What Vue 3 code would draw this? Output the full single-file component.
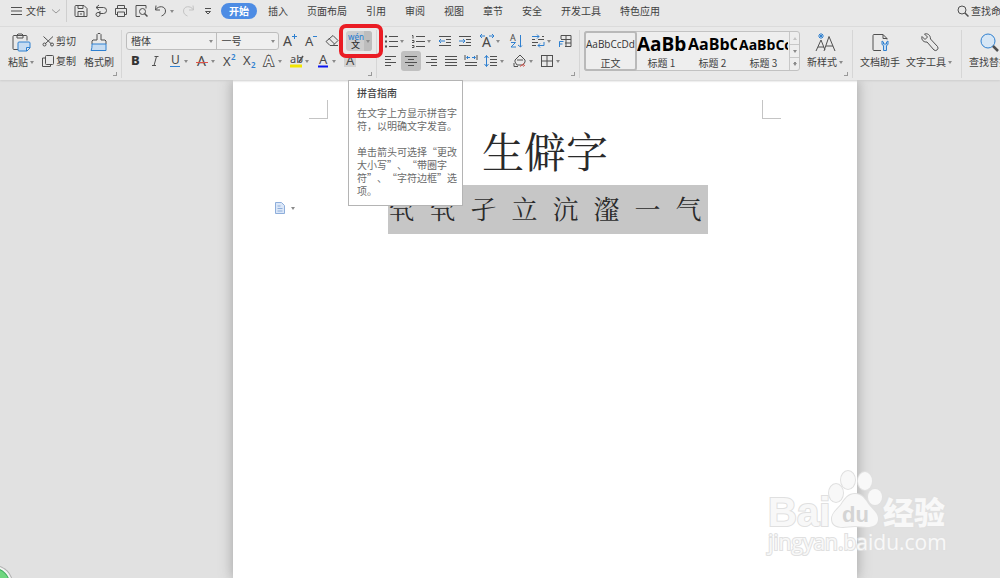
<template>
  <div class="app">
    <!-- 标题栏 -->
    <header class="menu-bar">
      <button class="file-btn">
        <svg class="icon-sm" viewBox="0 0 12 12" v-html="icons.menu"></svg>
        <span>文件</span>
        <svg class="icon-sm" viewBox="0 0 12 12" v-html="icons.chevron"></svg>
      </button>
      <div class="quick-bar">
        <button
          v-for="item in quickItems"
          :key="item.icon"
          class="tool"
          :class="{ drop: item.drop }"
          :aria-label="item.label"
        >
          <svg class="icon" viewBox="0 0 16 16" v-html="icons[item.icon]"></svg>
          <i v-if="item.drop" class="caret"></i>
        </button>
      </div>
      <nav class="tabs">
        <button
          v-for="tab in tabs"
          :key="tab"
          class="tab"
          :class="{ active: tab === activeTab }"
          @click="activeTab = tab"
        >{{ tab }}</button>
      </nav>
      <button class="search-btn">
        <svg class="icon-sm" viewBox="0 0 12 12" v-html="icons.search"></svg>
        <span>查找命令</span>
      </button>
    </header>

    <!-- 功能区 -->
    <section class="ribbon">
      <div class="group clipboard">
        <button class="big-btn">
          <svg class="icon-lg" viewBox="0 0 22 22" v-html="icons.paste"></svg>
          <span class="label">粘贴<i class="caret"></i></span>
        </button>
        <div class="rows">
          <button class="text-btn">
            <svg class="icon-sm" viewBox="0 0 12 12" v-html="icons.cut"></svg>
            <span>剪切</span>
          </button>
          <button class="text-btn">
            <svg class="icon-sm" viewBox="0 0 12 12" v-html="icons.copy"></svg>
            <span>复制</span>
          </button>
        </div>
        <button class="big-btn">
          <svg class="icon-lg" viewBox="0 0 22 22" v-html="icons.brush"></svg>
          <span class="label">格式刷</span>
        </button>
        <i class="corner"></i>
      </div>

      <div class="group font">
        <div class="row">
          <div class="combos">
            <label class="combo family">
              <select v-model="fontFamily" aria-label="字体">
                <option>楷体</option>
                <option>宋体</option>
                <option>黑体</option>
              </select>
              <i class="caret"></i>
            </label>
            <label class="combo size">
              <select v-model="fontSize" aria-label="字号">
                <option>一号</option>
                <option>二号</option>
                <option>三号</option>
              </select>
              <i class="caret"></i>
            </label>
          </div>
          <button
            v-for="item in sizeItems"
            :key="item.icon"
            class="tool spaced"
            :aria-label="item.label"
          >
            <svg class="icon" viewBox="0 0 16 16" v-html="icons[item.icon]"></svg>
          </button>
          <div class="pinyin">
            <button class="pinyin-btn" aria-label="拼音指南" aria-describedby="pinyin-tip">
              <svg class="icon" viewBox="0 0 16 16" v-html="icons.pinyin"></svg>
              <span class="pinyin-drop"><i class="caret"></i></span>
            </button>
            <div class="marker"></div>
            <div id="pinyin-tip" class="tooltip" role="tooltip">
              <strong>拼音指南</strong>
              <p>在文字上方显示拼音字<br />符，以明确文字发音。</p>
              <p>单击箭头可选择“更改<br />大小写”、“带圈字<br />符”、“字符边框”选<br />项。</p>
            </div>
          </div>
        </div>
        <div class="row">
          <button
            v-for="item in fontItems"
            :key="item.icon"
            class="tool"
            :class="{ drop: item.drop }"
            :aria-label="item.label"
          >
            <svg class="icon" viewBox="0 0 16 16" v-html="icons[item.icon]"></svg>
            <i v-if="item.drop" class="caret"></i>
          </button>
        </div>
        <i class="corner"></i>
      </div>

      <div class="group paragraph">
        <div v-for="(row, i) in paragraphRows" :key="i" class="row">
          <button
            v-for="item in row"
            :key="item.icon"
            class="tool"
            :class="{ drop: item.drop, on: item.on, gap: item.gap }"
            :aria-label="item.label"
          >
            <svg class="icon" viewBox="0 0 16 16" v-html="icons[item.icon]"></svg>
            <i v-if="item.drop" class="caret"></i>
          </button>
        </div>
        <i class="corner"></i>
      </div>

      <div class="group styles">
        <div class="gallery">
          <button
            v-for="s in styleItems"
            :key="s.name"
            class="style-item"
            :class="[s.kind, { selected: s.name === activeStyle }]"
            @click="activeStyle = s.name"
          >
            <span class="sample">{{ s.sample }}</span>
            <span class="style-name">{{ s.name }}</span>
          </button>
          <div class="scroller">
            <button aria-label="上一行"><i class="caret up"></i></button>
            <button aria-label="下一行"><i class="caret"></i></button>
            <button aria-label="更多样式"><i class="caret more"></i></button>
          </div>
        </div>
        <button class="big-btn">
          <svg class="icon-lg" viewBox="0 0 22 22" v-html="icons.newStyle"></svg>
          <span class="label">新样式<i class="caret"></i></span>
        </button>
        <i class="corner"></i>
      </div>

      <div class="group helpers">
        <button class="big-btn">
          <svg class="icon-lg" viewBox="0 0 22 22" v-html="icons.docHelper"></svg>
          <span class="label">文档助手</span>
        </button>
        <button class="big-btn">
          <svg class="icon-lg" viewBox="0 0 22 22" v-html="icons.wrench"></svg>
          <span class="label">文字工具<i class="caret"></i></span>
        </button>
      </div>

      <div class="group find">
        <button class="big-btn">
          <svg class="icon-lg" viewBox="0 0 22 22" v-html="icons.find"></svg>
          <span class="label">查找替换</span>
        </button>
      </div>
    </section>

    <!-- 文档区 -->
    <main class="canvas">
      <article class="page">
        <div class="margins">
          <i class="mark left"></i>
          <i class="mark right"></i>
        </div>
        <h1 class="title">生僻字</h1>
        <div class="line">
          <p class="selection">
            <span v-for="(ch, i) in phrase" :key="i">{{ ch }}</span>
          </p>
          <button class="paste-tag" aria-label="粘贴选项">
            <svg class="icon-sm" viewBox="0 0 12 12" v-html="icons.pasteTag"></svg>
            <i class="caret"></i>
          </button>
        </div>
      </article>
      <i class="ball"></i>
      <svg class="watermark" viewBox="0 0 186 90">
        <ellipse cx="72" cy="24" rx="7" ry="9" />
        <ellipse cx="84" cy="11" rx="7" ry="9" />
        <ellipse cx="101" cy="12" rx="7" ry="9" />
        <ellipse cx="111" cy="28" rx="7" ry="8" />
        <path d="M91 25c7 0 10 5 14 11c4 5 9 8 9 14c0 6-5 8-11 8c-4 0-7-1-12-1s-8 1-12 1c-6 0-11-2-11-8c0-6 5-9 9-14c4-6 7-11 14-11z" />
        <text class="wm-bai" x="4" y="57">Bai</text>
        <text class="wm-du" x="78" y="53">du</text>
        <text class="wm-exp" x="119" y="55">经验</text>
        <text class="wm-url" x="4" y="81">jingyan.baidu.com</text>
      </svg>
    </main>
  </div>
</template>

<script setup>
/**
 * 文字处理编辑器主界面：菜单栏、功能区、文档页面
 */
import { ref } from 'vue'

const activeTab = ref('开始')
const activeStyle = ref('正文')
const fontFamily = ref('楷体')
const fontSize = ref('一号')

const tabs = ['开始', '插入', '页面布局', '引用', '审阅', '视图', '章节', '安全', '开发工具', '特色应用']
const phrase = [...'茕茕孑立沆瀣一气']

const quickItems = [
  { icon: 'save', label: '保存' },
  { icon: 'export', label: '输出' },
  { icon: 'print', label: '打印' },
  { icon: 'preview', label: '打印预览' },
  { icon: 'undo', label: '撤销', drop: true },
  { icon: 'redo', label: '恢复' },
  { icon: 'more', label: '自定义快速访问' }
]

const sizeItems = [
  { icon: 'grow', label: '增大字号' },
  { icon: 'shrink', label: '减小字号' },
  { icon: 'eraser', label: '清除格式' }
]

const fontItems = [
  { icon: 'bold', label: '加粗' },
  { icon: 'italic', label: '倾斜' },
  { icon: 'underline', label: '下划线', drop: true },
  { icon: 'strike', label: '删除线', drop: true },
  { icon: 'sup', label: '上标' },
  { icon: 'sub', label: '下标' },
  { icon: 'effect', label: '文字效果', drop: true },
  { icon: 'highlight', label: '突出显示', drop: true },
  { icon: 'color', label: '字体颜色', drop: true },
  { icon: 'shade', label: '字符底纹' }
]

const paragraphRows = [
  [
    { icon: 'bullets', label: '项目符号', drop: true },
    { icon: 'numbers', label: '编号', drop: true },
    { icon: 'outdent', label: '减少缩进量' },
    { icon: 'indent', label: '增加缩进量' },
    { icon: 'scale', label: '中文版式', drop: true, gap: true },
    { icon: 'sort', label: '排序', gap: true },
    { icon: 'wrap', label: '显示编辑标记', drop: true, gap: true },
    { icon: 'tabStop', label: '制表位' }
  ],
  [
    { icon: 'left', label: '左对齐' },
    { icon: 'center', label: '居中对齐', on: true },
    { icon: 'right', label: '右对齐' },
    { icon: 'justify', label: '两端对齐' },
    { icon: 'distribute', label: '分散对齐' },
    { icon: 'spacing', label: '行距', drop: true },
    { icon: 'fill', label: '底纹颜色', drop: true, gap: true },
    { icon: 'border', label: '边框', drop: true }
  ]
]

const styleItems = [
  { name: '正文', sample: 'AaBbCcDd', kind: 'body' },
  { name: '标题 1', sample: 'AaBb', kind: 'h1' },
  { name: '标题 2', sample: 'AaBbC', kind: 'h2' },
  { name: '标题 3', sample: 'AaBbCc', kind: 'h3' }
]

// 图标：默认描边色由 svg 继承，蓝色为强调部分
const BLUE = '#2f80d0'
const B = `stroke="${BLUE}"`
const letter = (x, y, size, ch, fill = '#484848', weight = 400) =>
  `<text x="${x}" y="${y}" font-size="${size}" font-weight="${weight}" font-family="Noto Sans, Noto Sans CJK SC, sans-serif" fill="${fill}" stroke="none">${ch}</text>`

const icons = {
  menu: '<path d="M1 2.500h11M1 6h11M1 9.500h11"/>',
  chevron: '<path d="M2 4.500l4 3.500l4-3.500" stroke="#999"/>',
  search: '<circle cx="5" cy="5" r="4"/><path d="M8 8l3.500 3.500" stroke-width="1.500"/>',
  save: '<path d="M3 2.500h8l3 3v8h-11a1 1 0 0 1-1-1v-9a1 1 0 0 1 1-1z"/><path d="M5 2.500v3h5v-3M5 13.500v-5h6v5M7 11h2"/>',
  export: '<path d="M3 4.500h7.500a3 3 0 0 1 0 6h-4M6 2l-3 2.500l3 2.500M7 8v3.500a2 2 0 1 1-2-2h2"/>',
  print: '<path d="M4.500 5v-2.500h7v2.500M4.500 11.500h-2v-6h11v6h-2"/><path d="M4.500 9h7v4.500h-7z"/>',
  preview: '<path d="M7 13.500h-4v-11h10v3"/><circle cx="9.500" cy="8.500" r="3"/><path d="M11.500 10.500l3 3" stroke-width="1.500"/>',
  undo: '<path d="M3 2.500l-.5 4.500h4.500M2.500 7c3-5 10-4 10 1c0 3-2 4-4 5"/>',
  redo: '<path d="M13 2.500l.5 4.500h-4.500M13.500 7c-3-5-10-4-10 1c0 3 2 4 4 5" stroke="#c4c4c4"/>',
  more: '<path d="M5 5.500h6M5.500 8.500l2.500 2.500l2.500-2.500z"/>',
  paste: `<path d="M8 17.500h-4a1 1 0 0 1-1-1v-12a1 1 0 0 1 1-1h12a1 1 0 0 1 1 1v4M7 3v3h6v-3l-1-1h-4z"/><path d="M8 11a1 1 0 0 1 1-1h10a1 1 0 0 1 1 1v5l-3 3h-8a1 1 0 0 1-1-1zM20 15.500h-3.500v3.500" fill="#c6dcf2" ${B}/>`,
  cut: '<path d="M1.500 1.500l8 7.500M11 1.500l-8 7.500"/><circle cx="2.500" cy="9.500" r="1.500"/><circle cx="10" cy="9.500" r="1.500"/>',
  copy: '<rect x="3.500" y=".5" width="8" height="9" rx="1"/><path d="M3.500 3h-3v8.500h8v-2"/>',
  brush: `<path d="M4 12v-3l1-1h4v-5.500l1-1h2l1 1v5.500h4l1 1v3"/><path d="M4 12h14v6.500h-15c1-2 1-4 1-6.500z" fill="#c6dcf2" ${B}/>`,
  grow: `${letter(1, 13, 14, 'A')}<path d="M10 3.500h5M12.500 1v5" ${B}/>`,
  shrink: `${letter(2, 13, 13, 'A')}<path d="M10 3.500h4" ${B}/>`,
  eraser: '<path d="M9 2.500l5 5l-5 5h-3l-4-4zM5 5.500l5.500 5.500M8 12.500h6"/>',
  pinyin: letter(1, 7, 8, 'wén', BLUE, 500) + letter(4, 15, 9, '文', '#333', 500),
  bold: letter(4, 12, 13, 'B', '#333', 800),
  italic: '<path d="M7.500 3.500h4M5 12.500h4M9.500 3.500l-2.500 9"/>',
  underline: `${letter(4, 11, 12, 'U')}<path d="M3 13.500h10" ${B}/>`,
  strike: `${letter(3, 13, 14, 'A')}<path d="M2 9.500h12" stroke="#e0524a"/>`,
  sup: letter(2, 13, 13, 'X') + letter(10, 7, 8, '2', BLUE, 600),
  sub: letter(2, 12, 13, 'X') + letter(10, 15, 8, '2', BLUE, 600),
  effect: '<text x="3" y="13" font-size="14" font-weight="600" font-family="Noto Sans, sans-serif" fill="#f4f4f4" stroke="#5c5c5c" stroke-width="2" paint-order="stroke">A</text>',
  highlight: `${letter(2, 10, 11, 'ab')}<path d="M15 3l-4 6" stroke-width="1.500"/><path d="M2 13h12" stroke="#f2e600" stroke-width="3"/>`,
  color: `${letter(4, 11, 13, 'A')}<path d="M3 13.500h10" stroke="#0a14f0" stroke-width="2"/>`,
  shade: `<path d="M2 2h12v12h-12z" fill="#d2d2d2" stroke="none"/>${letter(4, 12, 13, 'A')}`,
  bullets: '<path d="M6 3.500h9M6 8.500h9M6 13.500h9"/><path d="M2 3.500h2M2 8.500h2M2 13.500h2" stroke-width="2"/>',
  numbers: '<path d="M6 3.500h9M6 8.500h9M6 13.500h9M2 2.500h1v3M2 7.500h2v2h-2M2 12.500h2v2h-2"/>',
  outdent: `<path d="M2 3.500h12M9 6.500h5M9 9.500h5M2 12.500h12"/><path d="M8 8h-6M4 6l-2 2l2 2" ${B}/>`,
  indent: `<path d="M2 3.500h12M9 6.500h5M9 9.500h5M2 12.500h12"/><path d="M2 8h6M6 6l2 2l-2 2" ${B}/>`,
  scale: `${letter(3, 14, 14, 'A')}<path d="M1 3h5M3 1l-2 2l2 2M10 3h5M13 1l2 2l-2 2" ${B}/>`,
  sort: `${letter(2, 8, 9, 'A')}<path d="M3 9.500h4.500l-4.500 4.500h5M12.500 2v12M10 12l2.500 2l1.500-1.500" ${B}/>`,
  wrap: `<path d="M8 6.500h6M2 6.500h3M12 3.500h2M2 9.500h6M2 12.500h4"/><path d="M2 3.500h7M7 1.500l2 2l-2 2M14 9v3.500h-6M10 10.500l-2 2l2 2" ${B}/>`,
  tabStop: `<path d="M4 6v-3.500h10v11h-6M9 2.500v11M4 6.500h10M8 10h6"/><path d="M2.500 14v-5.500h4M2.500 11h3" ${B}/>`,
  left: '<path d="M2 3.500h11M2 6.500h6M2 9.500h11M2 12.500h6"/>',
  center: '<path d="M2 3.500h12M5 6.500h6M2 9.500h12M5 12.500h6"/>',
  right: '<path d="M3 3.500h11M8 6.500h6M3 9.500h11M8 12.500h6"/>',
  justify: '<path d="M2 3.500h12M2 6.500h12M2 9.500h12M2 12.500h12"/>',
  distribute: `<path d="M2 9.500h12M2 12.500h12M2 2v5M14 2v5"/><path d="M4 4.500h3M5 3l-1.500 1.500l1.500 1.500M9 4.500h3M11 3l1.500 1.500l-1.500 1.500" ${B}/>`,
  spacing: `<path d="M7 3.500h7M7 6.500h7M7 9.500h7M7 12.500h7"/><path d="M3.500 2.500v11M1.500 5l2-2.500l2 2.500M1.500 11l2 2.500l2-2.500" ${B}/>`,
  fill: '<path d="M3 7l5-5l5 5v2l-2 3h-6l-2-3zM2 10v3.500h4M5 7h6"/><path d="M8 13.500l4-3M11 13.500l2-1.500" stroke="#e0524a"/>',
  border: '<rect x="2.500" y="2.500" width="11" height="11"/><path d="M8 3v10M3 8h10"/>',
  newStyle: `<path d="M2 19l5-11l4 10M4 15h6M10 19l5-14.500l6 14.500M12 14h7"/><path d="M7 1v6M4 4h6M5 2l4 4M9 2l-4 4" ${B}/>`,
  docHelper: `<path d="M12 18.500h-7a1 1 0 0 1-1-1v-14a1 1 0 0 1 1-1h9l4 4v1M14 2.500v4h4"/><path d="M13 9v3.500l1.500 1v5h3v-5l1.500-1v-3.500l-1.500 1v2h-3v-2z" fill="#c6dcf2" ${B}/>`,
  wrench: '<path d="M4 4.500l3 3l2.500-2.500l-3-3c3-1 6 1 6 5l7 7.500a2.500 2.500 0 0 1-3.500 3.500l-7-8c-3 .5-6-2-5-5.500z"/>',
  find: `<circle cx="10" cy="9" r="7" fill="#d6e6f5" ${B}/><path d="M15 14l5 5" stroke-width="2.500"/>`,
  pasteTag: '<path d="M1.500.5h6l3 3v8h-9z" fill="#dbe7f8" stroke="#8eaedb"/><path d="M3.500 4h3M3.500 6.500h5M3.500 9h5" stroke="#8eaedb"/>'
}
</script>

<style>
body {
  margin: 0;
}
</style>

<style scoped>
.app {
  display: flex;
  flex-direction: column;
  height: 100vh;
  overflow: hidden;
  background: #e1e1e1;
  color: #404040;
  font-family: "Noto Sans CJK SC", sans-serif;
  font-size: 10px;
  line-height: 16px;
}

button {
  display: flex;
  align-items: center;
  padding: 0;
  border: none;
  background: none;
  color: inherit;
  font: inherit;
  white-space: nowrap;
  cursor: pointer;
}

svg {
  flex: none;
  fill: none;
  stroke: #505050;
  stroke-width: 1;
  overflow: visible;
}

.icon {
  width: 16px;
  height: 16px;
}

.icon-sm {
  width: 12px;
  height: 12px;
}

.icon-lg {
  width: 22px;
  height: 22px;
}

.caret {
  flex: none;
  border: 2px solid transparent;
  border-top: 3px solid #8a8a8a;
  border-bottom: 0;
}

/* 菜单栏 */
.menu-bar {
  display: flex;
  flex: none;
  align-items: flex-start;
  height: 26px;
  border-bottom: 1px solid #dcdcdc;
  background: #e8e8e8;
}

.file-btn {
  gap: 4px;
  height: 22px;
  padding: 0 4px 0 10px;
  border-right: 1px solid #cfcfcf;
}

.quick-bar {
  display: flex;
  height: 22px;
  margin-left: 4px;
}

.tabs {
  display: flex;
  gap: 19px;
  margin: 3px 0 0 11px;
}

.tab.active {
  margin: 0 -8px;
  padding: 0 8px;
  border-radius: 8px;
  background: #4d8ce4;
  color: #fff;
  font-weight: 700;
}

.search-btn {
  gap: 2px;
  height: 22px;
  margin: 0 -11px 0 auto;
}

/* 功能区 */
.ribbon {
  position: relative;
  z-index: 2;
  display: flex;
  flex: none;
  padding-bottom: 2px;
  background: #e9e9e9;
  box-shadow: 0 1px 2px #cccccc;
}

.group {
  position: relative;
  flex: none;
  margin-top: 3px;
  padding: 1px 0 7px;
  border-right: 1px solid #d6d6d6;
}

.clipboard,
.styles,
.helpers,
.find {
  display: flex;
}

.clipboard {
  gap: 8px;
  padding-left: 8px;
  padding-right: 7px;
}

.font {
  padding-left: 3px;
  padding-right: 4px;
}

.paragraph {
  padding-left: 4px;
  padding-right: 4px;
}

.styles {
  gap: 7px;
  padding-left: 4px;
  padding-right: 9px;
}

.helpers {
  gap: 6px;
  padding-left: 7px;
  padding-right: 9px;
}

.find {
  padding-left: 7px;
  border-right: none;
}

.row {
  display: flex;
  height: 20px;
}

.corner {
  position: absolute;
  right: 4px;
  bottom: 2px;
  width: 3px;
  height: 3px;
  border-right: 1px solid #999;
  border-bottom: 1px solid #999;
}

.tool {
  width: 20px;
  padding-left: 2px;
}

.tool.drop {
  width: 27px;
  gap: 1px;
}

.tool.spaced {
  margin-left: 1px;
}

.tool.gap {
  margin-left: 2px;
}

.tool.on {
  border-radius: 3px;
  background: #c0c0c0;
}

.big-btn {
  flex-direction: column;
  padding-top: 1px;
}

.label {
  display: flex;
  align-items: center;
  gap: 2px;
}

.text-btn {
  gap: 2px;
  height: 20px;
}

.combos {
  display: flex;
  box-sizing: border-box;
  width: 153px;
  height: 18px;
  margin: 1px 0 0 1px;
  border: 1px solid #bdbdbd;
  border-radius: 3px;
  background: #efefef;
}

.combo {
  display: flex;
  align-items: center;
  padding-right: 3px;
}

.combo select {
  flex: 1;
  min-width: 0;
  padding: 0 0 0 4px;
  border: none;
  background: none;
  color: inherit;
  font: inherit;
  appearance: none;
}

.family {
  flex: 3;
  border-right: 1px solid #bdbdbd;
}

.size {
  flex: 2;
}

.pinyin {
  position: relative;
  margin-left: 4px;
}

.pinyin-btn {
  height: 20px;
  border-radius: 3px;
  background: #cdcdcd;
}

.pinyin-btn .icon {
  margin: 0 1px;
}

.pinyin-drop {
  display: flex;
  align-items: center;
  height: 20px;
  padding: 0 2px;
  border-radius: 0 3px 3px 0;
  background: #bdbdbd;
}

.marker {
  position: absolute;
  top: -7px;
  left: -7px;
  width: 36px;
  height: 26px;
  border: 4px solid #ea1c24;
  border-radius: 7px;
  pointer-events: none;
}

.tooltip {
  position: absolute;
  top: 49px;
  left: 2px;
  z-index: 3;
  box-sizing: border-box;
  width: 115px;
  padding: 5px 0 8px 8px;
  border: 1px solid #b4b4b4;
  background: #fff;
  color: #6a6a6a;
  line-height: 13px;
  text-spacing-trim: space-all;
  white-space: nowrap;
}

.tooltip strong {
  display: block;
  color: #444;
  font-weight: 500;
}

.tooltip p {
  margin: 7px 0 0;
}

.tooltip p + p {
  margin-top: 13px;
}

/* 样式库 */
.gallery {
  display: flex;
  box-sizing: border-box;
  height: 40px;
  border: 1px solid #c2c2c2;
  border-radius: 3px;
  background: #eeeeee;
}

.style-item {
  flex-direction: column;
  width: 51px;
  padding: 0 1px;
  overflow: hidden;
}

.style-item.selected {
  outline: 2px solid #b9b9b9;
  outline-offset: -1px;
  border-radius: 2px;
}

.sample {
  align-self: stretch;
  overflow: hidden;
  height: 24px;
  color: #000;
  font-family: "Open Sans", sans-serif;
  font-weight: 700;
  line-height: 25px;
  text-align: left;
}

.style-name {
  line-height: 14px;
}

.body .sample {
  color: #333;
  font-size: 10px;
  font-weight: 400;
}

.h1 .sample {
  font-size: 19px;
}

.h2 .sample {
  font-size: 16px;
}

.h3 .sample {
  font-size: 14px;
}

.scroller {
  display: flex;
  flex-direction: column;
  width: 9px;
  border-left: 1px solid #c8c8c8;
}

.scroller button {
  flex: 1;
  justify-content: center;
}

.scroller button + button {
  border-top: 1px solid #c8c8c8;
}

.caret.up {
  border-top: 0;
  border-bottom: 3px solid #c4c4c4;
}

.caret.more {
  box-shadow: 0 -2px 0 -1px #8a8a8a;
}

/* 文档区 */
.canvas {
  position: relative;
  display: flex;
  flex: 1;
  min-height: 0;
  padding: 0 143px 0 233px;
  overflow: hidden;
}

.page {
  flex: 1;
  background: #fff;
  box-shadow: 0 0 12px 1px #a8a8a8;
}

.margins {
  display: flex;
  justify-content: space-between;
  padding: 20px 76px 0;
}

.mark {
  width: 18px;
  height: 18px;
  border-bottom: 1px solid #c4c4c4;
}

.mark.left {
  border-right: 1px solid #c4c4c4;
}

.mark.right {
  border-left: 1px solid #c4c4c4;
}

.title,
.selection {
  color: #2a2a2a;
  font-family: KaiTi, "AR PL UKai CN", "Noto Serif CJK SC", "Noto Sans CJK SC", serif;
  font-weight: 400;
}

.title {
  margin: 8px 0 0;
  font-size: 42px;
  line-height: 46px;
  text-align: center;
}

.line {
  position: relative;
  display: flex;
  justify-content: center;
  margin-top: 12px;
}

.selection {
  display: flex;
  gap: 15px;
  margin: 0 0 0 6px;
  padding: 0 6px 4px 0;
  background: #c6c6c6;
  font-size: 26px;
  line-height: 45px;
}

.paste-tag {
  position: absolute;
  top: 17px;
  left: 41px;
  gap: 5px;
}

.ball {
  position: absolute;
  bottom: -24px;
  left: -24px;
  width: 32px;
  height: 32px;
  border: 2px solid #f4f4f4;
  border-radius: 50%;
  background: #6fd67f;
  box-shadow: 0 0 0 1px #b0b0b0, inset 0 0 0 1px #3fa860;
}

.watermark {
  position: absolute;
  right: 50px;
  bottom: 19px;
  width: 186px;
  height: 90px;
  fill: #f8f8f8;
  stroke: #e0e0e0;
  paint-order: stroke;
  stroke-width: 2;
}

.wm-bai {
  font: 700 40px "Liberation Sans", sans-serif;
}

.wm-du {
  fill: #d4d4d4;
  stroke: none;
  font: 700 22px "Liberation Sans", sans-serif;
}

.wm-exp {
  font: 900 31px "Noto Sans CJK SC", sans-serif;
}

.wm-url {
  font: 400 21px "Open Sans", sans-serif;
}
</style>
